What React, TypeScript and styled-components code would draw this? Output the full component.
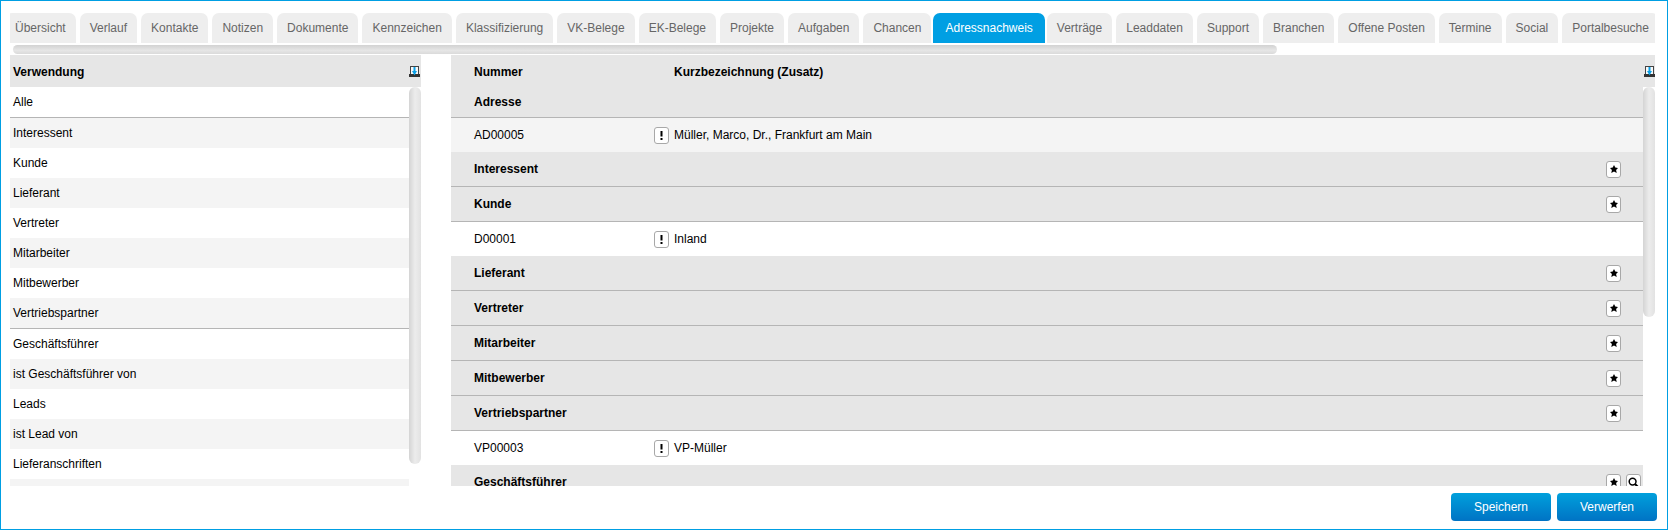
import React from "react";
import styled, { createGlobalStyle } from "styled-components";

const Global = createGlobalStyle`
  html, body { margin: 0; padding: 0; background: #fff; }
  body { font-family: "Liberation Sans", Arial, sans-serif; font-size: 12px; color: #000; }
`;

const Page = styled.div`
  width: 1668px;
  height: 530px;
  box-sizing: border-box;
  border: 1px solid #009fe3;
  padding: 12px 12px 0 9px;
  display: flex;
  flex-direction: column;
  overflow: hidden;
`;

const TabClip = styled.div`
  width: 1645px;
  height: 30px;
  overflow: hidden;
  flex: none;
`;

const TabStrip = styled.div`
  display: flex;
  gap: 4px;
  margin-left: -5px;
  width: max-content;
`;

const Tab = styled.div<{ $active?: boolean }>`
  height: 30px;
  padding: 0 ${(p) => (p.$active ? "12px" : "10px")};
  margin: 0 ${(p) => (p.$active ? "-2px" : "0")};
  display: flex;
  align-items: center;
  border-radius: 7px 7px 0 0;
  background: ${(p) => (p.$active ? "#009fe3" : "#eeeeee")};
  color: ${(p) => (p.$active ? "#ffffff" : "#666666")};
  white-space: nowrap;
`;

const HScroll = styled.div`
  flex: none;
  width: 1264px;
  height: 9px;
  margin: 2px 0 1px 3px;
  border-radius: 5px;
  box-sizing: border-box;
  background: linear-gradient(180deg, #d2d2d2, #e6e6e6 60%, #dadada);
`;

const Main = styled.div`
  flex: none;
  height: 431px;
  overflow: hidden;
  display: flex;
  gap: 30px;
`;

const LeftPanel = styled.section`
  width: 411px;
  flex: none;
  display: flex;
  flex-direction: column;
`;

const RightPanel = styled.section`
  width: 1204px;
  flex: none;
  display: flex;
  flex-direction: column;
`;

const PanelHead = styled.div`
  height: 32px;
  box-sizing: border-box;
  flex: none;
  background: #e6e6e6;
  display: flex;
  align-items: center;
  font-weight: bold;
`;

const LeftHead = styled(PanelHead)`
  padding: 1px 1px 0 3px;
  justify-content: space-between;
`;

const RightHead = styled(PanelHead)`
  padding: 1px 0 0 23px;
`;

const NumberHead = styled.div`
  width: 200px;
  flex: none;
`;

const ShortHead = styled.div`
  flex: 1;
`;

const Body = styled.div`
  display: flex;
  flex: 1;
  min-height: 0;
`;

const Rows = styled.div`
  flex: 1;
  min-width: 0;
`;

const VScrollColumn = styled.div`
  width: 12px;
  flex: none;
`;

const VThumb = styled.div<{ $h: number }>`
  height: ${(p) => p.$h}px;
  border-radius: 6px;
  background: linear-gradient(90deg, #d4d4d4, #ececec 50%, #e2e2e2);
`;

const ListRow = styled.div<{ $alt?: boolean; $line?: boolean }>`
  height: 30px;
  padding-left: 3px;
  display: flex;
  align-items: center;
  background: ${(p) => (p.$alt ? "#f4f4f4" : "#ffffff")};
  ${(p) => (p.$line ? "border-bottom: 1px solid #b5b5b5;" : "")}
`;

const AdresseRow = styled.div`
  height: 30px;
  padding-left: 23px;
  display: flex;
  align-items: center;
  background: #e6e6e6;
  font-weight: bold;
  border-bottom: 1px solid #b5b5b5;
`;

const GroupRow = styled.div`
  height: 34px;
  padding: 0 2px 0 23px;
  display: flex;
  align-items: center;
  background: #e6e6e6;
  font-weight: bold;
  border-bottom: 1px solid #b5b5b5;
`;

const GroupTitle = styled.div`
  flex: 1;
`;

const Actions = styled.div`
  display: flex;
  gap: 5px;
  margin-right: 20px;
`;

const ActionsWide = styled(Actions)`
  margin-right: 0;
`;

const DataRow = styled.div<{ $alt?: boolean }>`
  height: 34px;
  padding-left: 23px;
  display: flex;
  align-items: center;
  background: ${(p) => (p.$alt ? "#f4f4f4" : "#ffffff")};
`;

const DataNumber = styled.div`
  width: 180px;
  flex: none;
`;

const DataText = styled.div`
  margin-left: 5px;
`;

const SmallButton = styled.div`
  width: 15px;
  height: 17px;
  box-sizing: border-box;
  flex: none;
  border: 1px solid #a8a8a8;
  border-radius: 3px;
  background: #ffffff;
  display: flex;
  align-items: center;
  justify-content: center;
`;

const Footer = styled.div`
  flex: none;
  display: flex;
  justify-content: flex-end;
  gap: 6px;
  padding-top: 7px;
  margin-right: -2px;
`;

const ActionButton = styled.div`
  width: 100px;
  height: 28px;
  border-radius: 4px;
  background: linear-gradient(180deg, #00a0dc, #0073c4);
  color: #fff;
  display: flex;
  align-items: center;
  justify-content: center;
`;

const Export = () => (
  <svg width="11" height="11" viewBox="0 0 11 11">
    <rect x="1.5" y="0.5" width="8" height="8" fill="#f8f8f8" stroke="#444" strokeWidth="1" />
    <rect x="0" y="8" width="11" height="3" fill="#333" />
    <rect x="4.5" y="1" width="2" height="5" fill="#0a9fe6" />
    <polygon points="3,5 8,5 5.5,9.5" fill="#0a9fe6" />
  </svg>
);

const Bang = () => (
  <svg width="5" height="9" viewBox="0 0 5 9">
    <rect x="1.5" y="0" width="2" height="5.5" fill="#000" />
    <rect x="1.5" y="7" width="2" height="2" fill="#000" />
  </svg>
);

const Star = () => (
  <svg width="8" height="8" viewBox="0 0 10 10">
    <polygon
      points="5,0 6.6,3.2 10,3.8 7.6,6.2 8.4,10 5,8.2 1.6,10 2.4,6.2 0,3.8 3.4,3.2"
      fill="#000"
    />
  </svg>
);

const Lens = () => (
  <svg width="11" height="11" viewBox="0 0 11 11">
    <circle cx="4.6" cy="4.6" r="3.4" fill="none" stroke="#000" strokeWidth="1.5" />
    <line x1="7" y1="7" x2="10.4" y2="10.4" stroke="#000" strokeWidth="2" />
  </svg>
);

const tabs = [
  "Übersicht", "Verlauf", "Kontakte", "Notizen", "Dokumente", "Kennzeichen", "Klassifizierung",
  "VK-Belege", "EK-Belege", "Projekte", "Aufgaben", "Chancen", "Adressnachweis", "Verträge",
  "Leaddaten", "Support", "Branchen", "Offene Posten", "Termine", "Social", "Portalbesuche",
];

const usages: { label: string; line?: boolean }[] = [
  { label: "Alle", line: true },
  { label: "Interessent" },
  { label: "Kunde" },
  { label: "Lieferant" },
  { label: "Vertreter" },
  { label: "Mitarbeiter" },
  { label: "Mitbewerber" },
  { label: "Vertriebspartner", line: true },
  { label: "Geschäftsführer" },
  { label: "ist Geschäftsführer von" },
  { label: "Leads" },
  { label: "ist Lead von" },
  { label: "Lieferanschriften" },
  { label: "" },
];

const Group = ({ title, wide }: { title: string; wide?: boolean }) => (
  <GroupRow>
    <GroupTitle>{title}</GroupTitle>
    {wide ? (
      <ActionsWide>
        <SmallButton><Star /></SmallButton>
        <SmallButton><Lens /></SmallButton>
      </ActionsWide>
    ) : (
      <Actions>
        <SmallButton><Star /></SmallButton>
      </Actions>
    )}
  </GroupRow>
);

const Data = ({ nr, text, alt }: { nr: string; text: string; alt?: boolean }) => (
  <DataRow $alt={alt}>
    <DataNumber>{nr}</DataNumber>
    <SmallButton><Bang /></SmallButton>
    <DataText>{text}</DataText>
  </DataRow>
);

export default function App() {
  return (
    <Page>
      <Global />
      <TabClip>
        <TabStrip>
          {tabs.map((t) => (
            <Tab key={t} $active={t === "Adressnachweis"}>{t}</Tab>
          ))}
        </TabStrip>
      </TabClip>
      <HScroll />
      <Main>
        <LeftPanel>
          <LeftHead>
            <span>Verwendung</span>
            <Export />
          </LeftHead>
          <Body>
            <Rows>
              {usages.map((u, i) => (
                <ListRow key={i} $alt={i % 2 === 1} $line={u.line}>{u.label}</ListRow>
              ))}
            </Rows>
            <VScrollColumn><VThumb $h={377} /></VScrollColumn>
          </Body>
        </LeftPanel>
        <RightPanel>
          <RightHead>
            <NumberHead>Nummer</NumberHead>
            <ShortHead>Kurzbezeichnung (Zusatz)</ShortHead>
            <Export />
          </RightHead>
          <Body>
            <Rows>
              <AdresseRow>Adresse</AdresseRow>
              <Data nr="AD00005" text="Müller, Marco, Dr., Frankfurt am Main" alt />
              <Group title="Interessent" />
              <Group title="Kunde" />
              <Data nr="D00001" text="Inland" />
              <Group title="Lieferant" />
              <Group title="Vertreter" />
              <Group title="Mitarbeiter" />
              <Group title="Mitbewerber" />
              <Group title="Vertriebspartner" />
              <Data nr="VP00003" text="VP-Müller" />
              <Group title="Geschäftsführer" wide />
            </Rows>
            <VScrollColumn><VThumb $h={230} /></VScrollColumn>
          </Body>
        </RightPanel>
      </Main>
      <Footer>
        <ActionButton>Speichern</ActionButton>
        <ActionButton>Verwerfen</ActionButton>
      </Footer>
    </Page>
  );
}
